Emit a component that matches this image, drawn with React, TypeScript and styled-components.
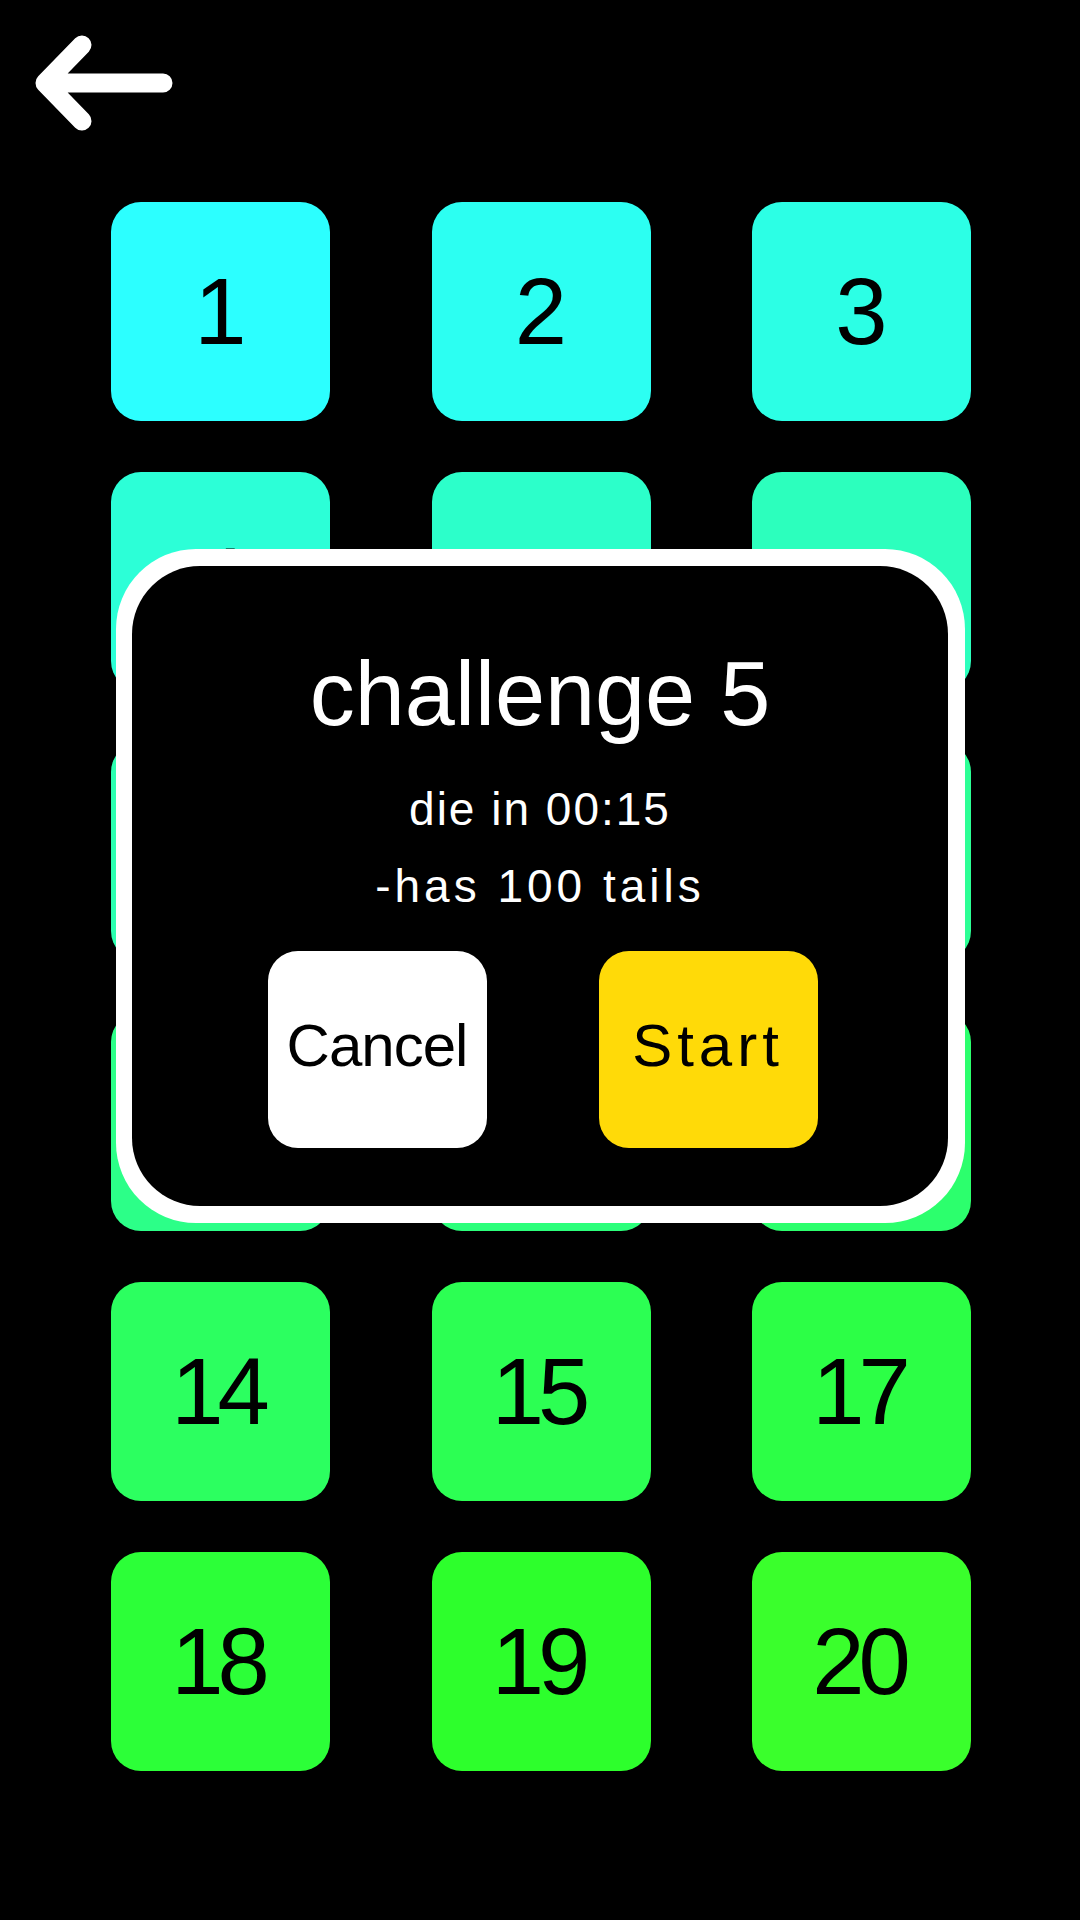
import React from "react";
import styled, { createGlobalStyle } from "styled-components";

const GlobalStyle = createGlobalStyle`
  html, body {
    margin: 0;
    padding: 0;
    background: #000;
  }
  body {
    font-family: "Liberation Sans", Arial, sans-serif;
  }
  * { box-sizing: border-box; }
`;

const Page = styled.div`
  position: relative;
  width: 1080px;
  height: 1920px;
  background: #000;
  overflow: hidden;
`;

const Header = styled.header`
  height: 202px;
  display: flex;
  align-items: flex-start;
`;

const BackButton = styled.button`
  border: 0;
  background: none;
  padding: 0;
  margin: 0;
  width: 180px;
  height: 170px;
  display: block;
  cursor: pointer;
`;

const Grid = styled.div`
  display: grid;
  grid-template-columns: repeat(3, 219px);
  justify-content: space-between;
  row-gap: 51px;
  padding: 0 109px 0 111px;
`;

const Tile = styled.div<{ $hue: number }>`
  height: 219px;
  border-radius: 30px;
  background: hsl(${(p) => p.$hue}, 100%, 58.6%);
  display: flex;
  align-items: center;
  justify-content: center;
  padding-right: 6px;
  font-size: 94px;
  letter-spacing: -6px;
  color: #000;
  user-select: none;
`;

const Dialog = styled.div`
  position: absolute;
  left: 116px;
  top: 549px;
  width: 849px;
  height: 674px;
  padding: 17px 17px 17px 16px;
  background: #fff;
  border-radius: 80px;
  display: flex;
`;

const DialogBody = styled.div`
  flex: 1;
  background: #000;
  border-radius: 68px;
  display: flex;
  flex-direction: column;
  align-items: center;
  padding-top: 83px;
`;

const Title = styled.h2`
  margin: 0;
  font-size: 90px;
  line-height: 90px;
  font-weight: 400;
  color: #fff;
`;

const Details = styled.div`
  margin-top: 37px;
  display: flex;
  flex-direction: column;
  align-items: center;
  gap: 11px;
`;

const DetailLine = styled.p<{ $spacing: number }>`
  margin: 0;
  font-size: 46px;
  line-height: 66px;
  color: #fff;
  letter-spacing: ${(p) => p.$spacing}px;
`;

const Actions = styled.div`
  margin-top: 32px;
  margin-left: 5px;
  display: flex;
  gap: 112px;
`;

const ActionButton = styled.button<{ $bg: string; $spacing: number }>`
  width: 219px;
  height: 197px;
  border: 0;
  border-radius: 30px;
  background: ${(p) => p.$bg};
  color: #000;
  font-family: "Liberation Sans", Arial, sans-serif;
  font-size: 60px;
  letter-spacing: ${(p) => p.$spacing}px;
  padding: 0 0 8px 0;
  display: flex;
  align-items: center;
  justify-content: center;
  cursor: pointer;
`;

const levels = [1, 2, 3, 4, 5, 7, 8, 9, 10, 11, 12, 13, 14, 15, 17, 18, 19, 20];

export default function App() {
  return (
    <>
      <GlobalStyle />
      <Page>
        <Header>
          <BackButton aria-label="back">
            <svg width="180" height="170" viewBox="0 0 180 170">
              <path
                d="M82 45 L45 83 L82 121 M45 83 H163"
                fill="none"
                stroke="#fff"
                strokeWidth="19"
                strokeLinecap="round"
                strokeLinejoin="round"
              />
            </svg>
          </BackButton>
        </Header>
        <Grid>
          {levels.map((n, i) => (
            <Tile key={n} $hue={180 - (i * 64) / 17}>
              {n}
            </Tile>
          ))}
        </Grid>
        <Dialog>
          <DialogBody>
            <Title>challenge 5</Title>
            <Details>
              <DetailLine $spacing={2}>die in 00:15</DetailLine>
              <DetailLine $spacing={4}>-has 100 tails</DetailLine>
            </Details>
            <Actions>
              <ActionButton $bg="#ffffff" $spacing={-1}>Cancel</ActionButton>
              <ActionButton $bg="#ffda08" $spacing={5}>Start</ActionButton>
            </Actions>
          </DialogBody>
        </Dialog>
      </Page>
    </>
  );
}
